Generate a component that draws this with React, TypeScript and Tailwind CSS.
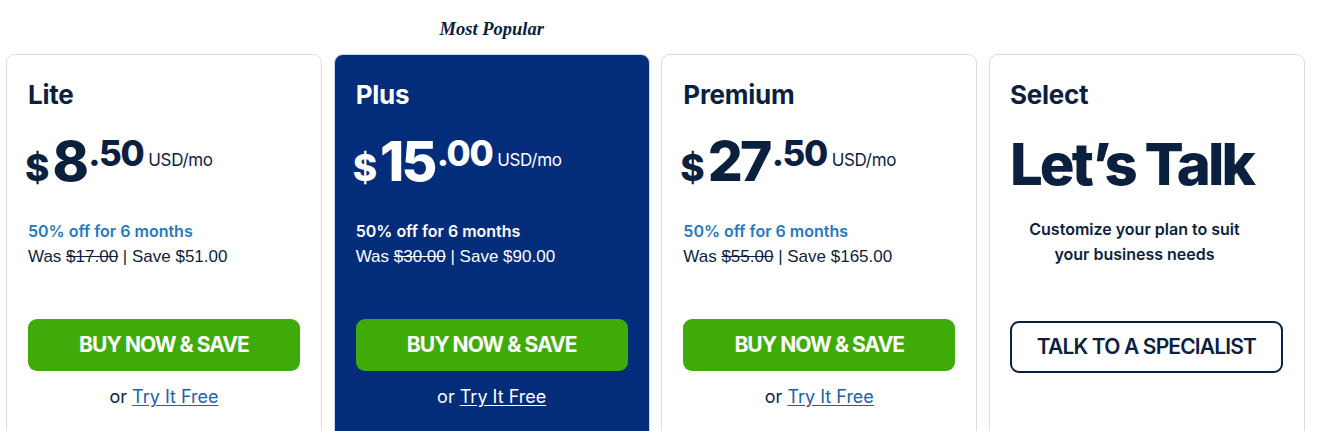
import React from "react";

const NAVY = "text-[#0b1f3f]";

type Plan = {
  name: string;
  whole: string;
  cents: string;
  was: string;
  save: string;
  featured?: boolean;
};

const plans: Plan[] = [
  { name: "Lite", whole: "8", cents: ".50", was: "$17.00", save: "$51.00" },
  { name: "Plus", whole: "15", cents: ".00", was: "$30.00", save: "$90.00", featured: true },
  { name: "Premium", whole: "27", cents: ".50", was: "$55.00", save: "$165.00" },
];

function PlanCard({ p }: { p: Plan }) {
  const f = p.featured;
  const txt = f ? "text-white" : NAVY;
  return (
    <div
      className={
        "h-[400px] rounded-[9px] border pl-[21px] pr-[21px] pt-[24px] " +
        (f ? "bg-[#032d7a] border-[#c9d8ef]" : "bg-white border-[#dcdcdc]")
      }
    >
      <div className={"text-[26px] leading-[32px] font-bold tracking-[-0.01em] " + txt}>{p.name}</div>
      <div className={"mt-[23px] flex items-start " + txt}>
        <div className="flex items-baseline">
          <span className="-ml-[3px] text-[37px] leading-none font-extrabold">$</span>
          <span className="ml-[3px] text-[55px] leading-none font-extrabold tracking-[-0.05em]">{p.whole}</span>
        </div>
        <div className="ml-[2px] mt-[2px] flex items-baseline">
          <span className="text-[35px] leading-none font-extrabold tracking-[-0.04em]">{p.cents}</span>
          <span className="ml-[5px] text-[17px] leading-none font-normal tracking-[-0.02em]">USD/mo</span>
        </div>
      </div>
      <div
        className={
          "mt-[30px] text-[16px] leading-[24px] font-semibold " + (f ? "text-white" : "text-[#2479c2]")
        }
      >
        50% off for 6 months
      </div>
      <div
        className={"mt-[1px] text-[17px] leading-[26px] " + txt}
        style={{ fontFamily: "'Liberation Sans', Arial, sans-serif" }}
      >
        Was <span className="line-through">{p.was}</span> | Save {p.save}
      </div>
      <button className="mt-[49px] flex h-[52px] w-full items-center justify-center rounded-[9px] bg-[#3eab0b] text-[21px] font-bold tracking-[-0.045em] text-white">
        BUY NOW &amp; SAVE
      </button>
      <div className={"mt-[13px] text-center text-[18px] leading-[26px] " + txt}>
        or{" "}
        <a className={"underline underline-offset-2 " + (f ? "text-white" : "text-[#1d62a8]")} href="#">
          Try It Free
        </a>
      </div>
    </div>
  );
}

function SelectCard() {
  return (
    <div className="h-[400px] rounded-[9px] border border-[#dcdcdc] bg-white pl-[20px] pr-[21px] pt-[24px]">
      <div className={"text-[26px] leading-[32px] font-bold tracking-[-0.01em] " + NAVY}>Select</div>
      <div className={"mt-[24px] text-[58px] leading-none font-extrabold tracking-[-0.05em] " + NAVY}>
        Let’s Talk
      </div>
      <div className={"mt-[24px] pr-[24px] text-center text-[16px] leading-[25px] font-semibold " + NAVY}>
        Customize your plan to suit
        <br />
        your business needs
      </div>
      <button
        className={
          "mt-[54px] flex h-[52px] w-full items-center justify-center rounded-[9px] border-2 border-[#0b1f3f] bg-white text-[21px] font-semibold tracking-[-0.04em] " +
          NAVY
        }
      >
        TALK TO A SPECIALIST
      </button>
    </div>
  );
}

export default function App() {
  return (
    <div
      className="h-[431px] w-[1322px] overflow-hidden bg-white"
      style={{ fontFamily: "Inter, 'Liberation Sans', sans-serif" }}
    >
      <div className="flex gap-[11.67px] pl-[6px]">
        {plans.map((p) => (
          <div key={p.name} className="flex w-[316px] flex-col">
            <div className="flex h-[54px] items-center justify-center pt-[6px]">
              {p.featured && (
                <span
                  className={"text-[18.5px] font-bold italic " + NAVY}
                  style={{ fontFamily: "'Liberation Serif', serif" }}
                >
                  Most Popular
                </span>
              )}
            </div>
            <PlanCard p={p} />
          </div>
        ))}
        <div className="flex w-[316px] flex-col">
          <div className="h-[54px]" />
          <SelectCard />
        </div>
      </div>
    </div>
  );
}
